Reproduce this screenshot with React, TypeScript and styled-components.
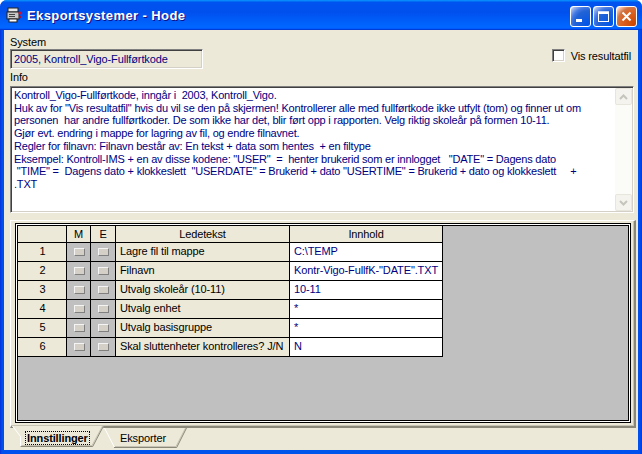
import React from 'react';
import styled, { createGlobalStyle } from 'styled-components';

const GlobalStyle = createGlobalStyle`
  html, body { margin: 0; padding: 0; background: #fff; }
  body { font-family: "Liberation Sans", Arial, sans-serif; font-size: 11px; letter-spacing: -0.12px; color: #000; }
  * { box-sizing: border-box; }
`;

const Window = styled.div`
  width: 642px;
  height: 454px;
  display: flex;
  flex-direction: column;
  background: linear-gradient(to right, #0831d9 0, #0050ee 2px, #0055ea 50%, #0050ee calc(100% - 2px), #0831d9 100%);
  border-radius: 7px 7px 0 0;
  overflow: hidden;
`;

const TitleBar = styled.div`
  height: 30px;
  flex: none;
  display: flex;
  align-items: center;
  padding: 0 5px 0 6px;
  background: linear-gradient(180deg, #0997ff, #0053ee 8%, #0050ee 40%, #06f 88%, #06f 93%, #005bff 95%, #003dd7 96%, #003dd7);
`;

const TitleText = styled.div`
  flex: 1;
  margin-left: 5px;
  color: #fff;
  font-weight: bold;
  font-size: 13px;
  letter-spacing: 0.4px;
  text-shadow: 1px 1px #0f1089;
`;

const TitleButtons = styled.div`
  display: flex;
  gap: 2px;
  margin-top: 3px;
`;

const CaptionButton = styled.div<{ $close?: boolean }>`
  width: 21px;
  height: 21px;
  border: 1px solid #fff;
  border-radius: 3px;
  display: flex;
  align-items: center;
  justify-content: center;
  background: ${p => p.$close
    ? 'radial-gradient(circle at 90% 90%, #cc4600 0%, #dc6527 55%, #cd7546 70%, #ffccb2 90%, #fff 100%)'
    : 'radial-gradient(circle at 90% 90%, #0054e9 0%, #2263d5 55%, #4479e4 70%, #a3bbec 90%, #fff 100%)'};
`;

const Client = styled.div`
  flex: 1;
  margin: 0 4px 4px;
  background: #ece9d8;
  display: flex;
  flex-direction: column;
  padding: 5px 2px 2px 6px;
`;

const TopRow = styled.div`
  display: flex;
  justify-content: space-between;
`;

const Field = styled.div`
  display: flex;
  flex-direction: column;
`;

const Label = styled.div`
  line-height: 14px;
  height: 14px;
`;

const InfoLabel = styled(Label)`
  margin-top: 1px;
  margin-bottom: 2px;
`;

const TextBox = styled.div`
  width: 193px;
  height: 20px;
  background: #ece9d8;
  color: #000080;
  border: 1px solid;
  border-color: #808080 #fff #fff #808080;
  box-shadow: inset 1px 1px #404040, inset -1px -1px #d4d0c8;
  padding: 2px 3px;
  line-height: 14px;
  white-space: nowrap;
`;

const CheckRow = styled.label`
  display: flex;
  align-items: center;
  gap: 6px;
  margin-top: 14px;
  margin-right: 5px;
  height: 13px;
  align-self: flex-start;
`;

const CheckBox = styled.span`
  width: 13px;
  height: 13px;
  background: #fff;
  border: 1px solid;
  border-color: #808080 #fff #fff #808080;
  box-shadow: inset 1px 1px #404040, inset -1px -1px #d4d0c8;
`;

const InfoBox = styled.div`
  height: 127px;
  margin-right: 2px;
  background: #fff;
  border: 1px solid;
  border-color: #808080 #fff #fff #808080;
  box-shadow: inset 1px 1px #404040, inset -1px -1px #d4d0c8;
  padding: 1px;
  display: flex;
`;

const InfoText = styled.div`
  flex: 1;
  color: #000080;
  padding: 1px 0 0 2px;
  line-height: 12.7px;
  letter-spacing: -0.2px;
  white-space: pre;
  overflow: hidden;
`;

const ScrollBar = styled.div`
  width: 17px;
  display: flex;
  flex-direction: column;
  justify-content: space-between;
  background: #fbfbf8;
`;

const ScrollArrow = styled.div`
  width: 17px;
  height: 17px;
  border: 1px solid #e8e6dc;
  border-radius: 2px;
  background: #f4f3ee;
  display: flex;
  align-items: center;
  justify-content: center;
`;

const TabPanel = styled.div`
  margin-top: 7px;
  height: 208px;
  border-style: solid;
  border-width: 1px 2px 2px 1px;
  border-color: #fff #8a8878 #8a8878 #fff;
  box-shadow: inset -1px -1px #c6c3b4;
  padding: 2px 3px 3px 4px;
  display: flex;
`;

const GridFrame = styled.div`
  flex: 1;
  border: 1px solid #000;
  background: #fff;
  padding: 1px;
  display: flex;
`;

const GridArea = styled.div`
  flex: 1;
  border: 1px solid #000;
  background: #c0c0c0;
`;

const Table = styled.div`
  display: grid;
  grid-template-columns: 49px 24px 25px 174px 153px;
  grid-template-rows: 17px repeat(6, 19px);
  width: 425px;
`;

type CellKind = 'head' | 'num' | 'flag' | 'label' | 'value';

const cellBg: Record<CellKind, string> = {
  head: '#ece9d8',
  num: '#ece9d8',
  flag: '#c0c0c0',
  label: '#ece9d8',
  value: '#fff',
};

const Cell = styled.div<{ $kind: CellKind }>`
  border-right: 1px solid #000;
  border-bottom: 1px solid #000;
  background: ${p => cellBg[p.$kind]};
  color: ${p => (p.$kind === 'value' ? '#000080' : '#000')};
  text-align: ${p => (p.$kind === 'head' || p.$kind === 'num' ? 'center' : 'left')};
  padding: ${p => (p.$kind === 'head' ? '1px 3px 0' : '1px 3px 0 4px')};
  line-height: 15px;
  white-space: nowrap;
  overflow: hidden;
  display: ${p => (p.$kind === 'flag' ? 'flex' : 'block')};
  align-items: center;
  justify-content: center;
`;

const FlagBox = styled.span`
  width: 11px;
  height: 8px;
  margin-top: -1px;
  background: #d4d0c8;
  border: 1px solid;
  border-color: #f4f4f4 #808080 #808080 #f4f4f4;
`;

const TabStrip = styled.div`
  display: flex;
  margin-left: 2px;
  height: 20px;
`;

const Tab = styled.div<{ $active?: boolean }>`
  position: relative;
  width: ${p => (p.$active ? 92 : 83)}px;
  height: ${p => (p.$active ? 22 : 20)}px;
  margin-top: ${p => (p.$active ? -2 : 0)}px;
  padding: ${p => (p.$active ? '5px 0 0 13px' : '3px 0 0 14px')};
  font-weight: ${p => (p.$active ? 'bold' : 'normal')};
  svg { position: absolute; left: 0; top: 0; }
`;

const TabLabel = styled.span<{ $focus?: boolean }>`
  position: relative;
  display: inline-block;
  line-height: 12px;
  padding: 0 1px;
  border: 1px dotted ${p => (p.$focus ? '#000' : 'transparent')};
`;

const infoLines = [
  'Kontroll_Vigo-Fullførtkode, inngår i  2003, Kontroll_Vigo.',
  'Huk av for "Vis resultatfil" hvis du vil se den på skjermen! Kontrollerer alle med fullførtkode ikke utfylt (tom) og finner ut om',
  'personen  har andre fullførtkoder. De som ikke har det, blir ført opp i rapporten. Velg riktig skoleår på formen 10-11.',
  'Gjør evt. endring i mappe for lagring av fil, og endre filnavnet.',
  'Regler for filnavn: Filnavn består av: En tekst + data som hentes  + en filtype',
  'Eksempel: Kontroll-IMS + en av disse kodene: "USER"  =  henter brukerid som er innlogget   "DATE" = Dagens dato',
  ' "TIME" =  Dagens dato + klokkeslett  "USERDATE" = Brukerid + dato "USERTIME" = Brukerid + dato og klokkeslett     +',
  '.TXT',
];

const rows = [
  { label: 'Lagre fil til mappe', value: 'C:\\TEMP' },
  { label: 'Filnavn', value: 'Kontr-Vigo-FullfK-"DATE".TXT' },
  { label: 'Utvalg skoleår (10-11)', value: '10-11' },
  { label: 'Utvalg enhet', value: '*' },
  { label: 'Utvalg basisgruppe', value: '*' },
  { label: 'Skal sluttenheter kontrolleres? J/N', value: 'N' },
];

const AppIcon = () => (
  <svg width="16" height="16" viewBox="0 0 16 16">
    <rect x="2" y="1" width="10" height="4" fill="#e8e8e8" stroke="#222" />
    <rect x="1" y="5" width="12" height="7" fill="#c8c8c8" stroke="#222" />
    <rect x="3" y="12" width="8" height="3" fill="#fff" stroke="#222" />
    <rect x="3" y="7" width="6" height="1" fill="#444" />
    <rect x="3" y="9" width="6" height="1" fill="#444" />
    <circle cx="14" cy="6" r="1.5" fill="#d0103a" />
    <circle cx="14" cy="10" r="1.2" fill="#a0104a" />
  </svg>
);

const Chevron = ({ up }: { up?: boolean }) => (
  <svg width="9" height="6" viewBox="0 0 9 6">
    <path d={up ? 'M1 5 L4.5 1.5 L8 5' : 'M1 1 L4.5 4.5 L8 1'} fill="none" stroke="#c5c4bd" strokeWidth="2" />
  </svg>
);

const App: React.FC = () => {
  return (
    <>
      <GlobalStyle />
      <Window>
        <TitleBar>
          <AppIcon />
          <TitleText>Eksportsystemer - Hode</TitleText>
          <TitleButtons>
            <CaptionButton>
              <svg width="13" height="13" viewBox="0 0 13 13">
                <rect x="2" y="9" width="6" height="3" fill="#fff" />
              </svg>
            </CaptionButton>
            <CaptionButton>
              <svg width="13" height="13" viewBox="0 0 13 13">
                <rect x="1.5" y="2" width="10" height="9.5" fill="none" stroke="#fff" />
                <rect x="1" y="1.5" width="11" height="2.5" fill="#fff" />
              </svg>
            </CaptionButton>
            <CaptionButton $close>
              <svg width="13" height="13" viewBox="0 0 13 13">
                <path d="M2.5 2.5 L10.5 10.5 M10.5 2.5 L2.5 10.5" stroke="#fff" strokeWidth="2" />
              </svg>
            </CaptionButton>
          </TitleButtons>
        </TitleBar>

        <Client>
          <TopRow>
            <Field>
              <Label>System</Label>
              <TextBox>2005, Kontroll_Vigo-Fullførtkode</TextBox>
            </Field>
            <CheckRow>
              <CheckBox />
              Vis resultatfil
            </CheckRow>
          </TopRow>

          <InfoLabel>Info</InfoLabel>
          <InfoBox>
            <InfoText>
              {infoLines.map((line, i) => (
                <div key={i}>{line}</div>
              ))}
            </InfoText>
            <ScrollBar>
              <ScrollArrow><Chevron up /></ScrollArrow>
              <ScrollArrow><Chevron /></ScrollArrow>
            </ScrollBar>
          </InfoBox>

          <TabPanel>
            <GridFrame>
              <GridArea>
                <Table>
                  <Cell $kind="head" />
                  <Cell $kind="head">M</Cell>
                  <Cell $kind="head">E</Cell>
                  <Cell $kind="head">Ledetekst</Cell>
                  <Cell $kind="head">Innhold</Cell>
                  {rows.map((row, i) => (
                    <React.Fragment key={i}>
                      <Cell $kind="num">{i + 1}</Cell>
                      <Cell $kind="flag"><FlagBox /></Cell>
                      <Cell $kind="flag"><FlagBox /></Cell>
                      <Cell $kind="label">{row.label}</Cell>
                      <Cell $kind="value">{row.value}</Cell>
                    </React.Fragment>
                  ))}
                </Table>
              </GridArea>
            </GridFrame>
          </TabPanel>

          <TabStrip>
            <Tab $active>
              <svg width="92" height="22" viewBox="0 0 92 22">
                <path d="M0 0 L92 0 L81 21 L9 21 L9 11 Z" fill="#ece9d8" />
                <path d="M0.5 0 L8.5 10.5 L8.5 21" fill="none" stroke="#fff" />
                <path d="M9.5 19.5 L80 19.5 L90.5 0" fill="none" stroke="#c6c3b4" />
                <path d="M8.5 20.5 L80.7 20.5 L91.5 0" fill="none" stroke="#8a8878" />
              </svg>
              <TabLabel $focus>Innstillinger</TabLabel>
            </Tab>
            <Tab>
              <svg width="83" height="20" viewBox="0 0 83 20">
                <path d="M0 0 L83 0 L73 19 L10 19 Z" fill="#ece9d8" />
                <path d="M0.5 0 L10.3 19" fill="none" stroke="#fff" />
                <path d="M11 18.5 L72 18.5 L81.5 0" fill="none" stroke="#c6c3b4" />
                <path d="M10 19.5 L72.7 19.5 L82.5 0" fill="none" stroke="#8a8878" />
              </svg>
              <TabLabel>Eksporter</TabLabel>
            </Tab>
          </TabStrip>
        </Client>
      </Window>
    </>
  );
};

export default App;
